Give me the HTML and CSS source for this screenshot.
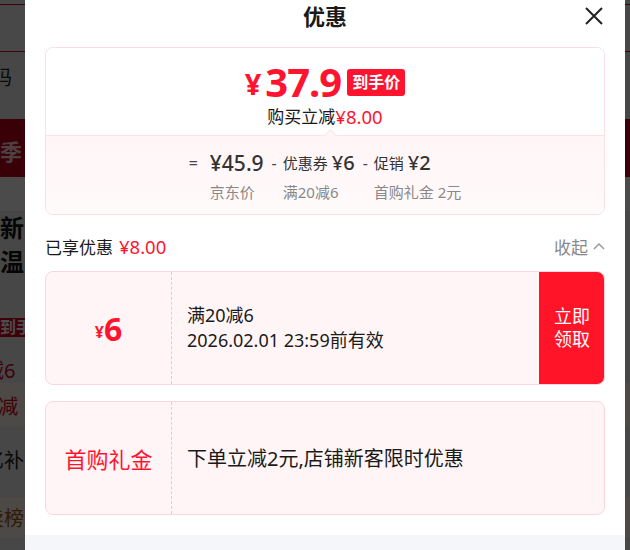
FILE: index.html
```html
<!DOCTYPE html>
<html lang="zh-CN">
<head>
<meta charset="utf-8">
<title>优惠</title>
<link rel="stylesheet" href="styles.css">
</head>
<body>
<div class="page">
  <div class="pg-top"></div>
  <div class="pg-bar"></div>
  <div class="pg-row pg-code"><span>二维码</span><i class="pg-pill"></i></div>
  <div class="pg-banner"><span>四季</span></div>
  <div class="pg-gap"></div>
  <div class="pg-title"><span>焕新</span><span>保温</span></div>
  <div class="pg-tagrow"><span class="pg-tag">到手</span></div>
  <div class="pg-row pg-red pg-cut"><span>满减6</span></div>
  <div class="pg-row pg-warm pg-red"><span>200减</span></div>
  <div class="pg-row pg-dark"><span>百亿补</span></div>
  <div class="pg-row pg-warm pg-brown"><span>热卖榜</span></div>
</div>
<div class="mask"></div>
<div class="sheet">
  <header class="sheet-head">
    <h1>优惠</h1>
    <button class="close" aria-label="关闭">
      <svg width="18" height="18" viewBox="0 0 18 18"><path d="M1 1L17 17M17 1L1 17" stroke="#222" stroke-width="2" fill="none"/></svg>
    </button>
  </header>
  <div class="sheet-body">
    <section class="price-card">
      <div class="price-top">
        <div class="price-line"><span class="yen">¥</span><span class="num">37.9</span><span class="tag">到手价</span></div>
        <div class="save">购买立减<em>¥8.00</em></div>
      </div>
      <div class="price-calc">
        <span class="op op-eq">=</span>
        <div class="term"><div class="val"><b>¥45.9</b></div><div class="lbl">京东价</div></div>
        <span class="op">-</span>
        <div class="term"><div class="val">优惠券 <b>¥6</b></div><div class="lbl">满20减6</div></div>
        <span class="op">-</span>
        <div class="term"><div class="val">促销 <b>¥2</b></div><div class="lbl">首购礼金 2元</div></div>
      </div>
    </section>
    <div class="enjoyed">
      <div class="enjoyed-l">已享优惠 <em>¥8.00</em></div>
      <div class="fold">收起<svg width="12" height="8" viewBox="0 0 12 8"><path d="M1 7L6 2L11 7" stroke="#999" stroke-width="1.5" fill="none"/></svg></div>
    </div>
    <div class="coupon">
      <div class="c-left"><span class="c-yen">¥</span><span class="c-amt">6</span></div>
      <div class="c-mid"><div>满20减6</div><div>2026.02.01 23:59前有效</div></div>
      <div class="c-btn">立即<br>领取</div>
    </div>
    <div class="coupon">
      <div class="c-left"><span class="c-gift">首购礼金</span></div>
      <div class="c-mid c-big">下单立减2元,店铺新客限时优惠</div>
    </div>
  </div>
  <div class="sheet-foot"></div>
</div>
</body>
</html>
```
FILE: styles.css
```css
* { box-sizing: border-box; }
html, body { margin: 0; padding: 0; }
body {
  width: 630px;
  height: 550px;
  overflow: hidden;
  font-family: "Noto Sans", "Noto Sans CJK SC", sans-serif;
  background: #ededed;
}

/* background page (dimmed) */
.page { width: 630px; }
.pg-top { height: 4px; background: #f0f0f0; }
.pg-bar { height: 48px; background: #f0f0f0; border-top: 1px solid #c8102e; border-bottom: 1px solid #c8102e; }
.pg-row { display: flex; align-items: center; font-size: 20px; color: #222; white-space: nowrap; }
.pg-row span { margin-left: -36px; }
.pg-code { height: 67px; padding-bottom: 18px; }
.pg-code span { margin-left: -48px; }
.pg-pill { display: block; width: 14px; height: 22px; margin-left: 17px; border: 1px solid #cfcfcf; border-radius: 8px; }
.pg-banner { height: 58px; padding-top: 4px; background: #c3001d; color: #ffd8dd; font-size: 22px; font-weight: 700; display: flex; align-items: center; white-space: nowrap; }
.pg-banner span { margin-left: -22px; }
.pg-gap { height: 34px; background: #fafafa; }
.pg-title { height: 68px; display: flex; flex-direction: column; font-size: 24px; font-weight: 700; color: #111; line-height: 34px; white-space: nowrap; }
.pg-title span { margin-left: -24px; }
.pg-tagrow { height: 58px; display: flex; align-items: flex-end; }
.pg-tag { background: #d2001c; color: #fff; font-size: 16px; line-height: 19px; font-weight: 700; padding: 0 6px 0 20px; margin-left: -20px; }
.pg-red { color: #d0001c; }
.pg-cut { height: 46px; padding-top: 18px; }
.pg-warm { background: #fff4ea; height: 44px; }
.pg-dark { height: 70px; padding-bottom: 6px; color: #222; }
.pg-brown { color: #a45a10; height: 40px; }

.mask { position: fixed; inset: 0; background: rgba(0, 0, 0, 0.7); }

/* sheet */
.sheet {
  position: fixed;
  left: 25px;
  top: 0;
  width: 600px;
  height: 550px;
  background: #fff;
  display: flex;
  flex-direction: column;
}
.sheet-head { position: relative; height: 32px; text-align: center; }
.sheet-head h1 { margin: 0; font-size: 22px; line-height: 32px; font-weight: 700; color: #1a1a1a; }
.close { position: absolute; right: 22px; top: 7px; width: 18px; height: 18px; padding: 0; border: 0; background: none; display: block; }
.close svg { display: block; }

.sheet-body { flex: 1; padding: 15px 20px 0; overflow: hidden; }
.sheet-foot { height: 15px; background: #f5f6fa; }

.price-card { border: 1px solid #fcdde3; border-radius: 8px; overflow: hidden; }
.price-top { padding: 14px 0 7px; text-align: center; background: #fff; }
.price-line { height: 40px; display: flex; align-items: center; justify-content: center; color: #ff1430; font-weight: 700; }
.yen { font-size: 29px; margin-right: 4px; margin-top: 4px; line-height: 30px; }
.num { font-size: 40px; letter-spacing: -1px; line-height: 40px; }
.tag { margin-left: 6px; background: #ff1430; color: #fff; font-size: 16px; line-height: 27px; height: 27px; padding: 0 5px; border-radius: 3px; }
.save { margin-top: 4px; height: 22px; font-size: 17px; line-height: 22px; color: #1a1a1a; display: flex; justify-content: center; align-items: center; }
.save em, .enjoyed em { font-style: normal; color: #ff1430; font-size: 18.5px; }

.price-calc {
  position: relative;
  border-top: 1px solid #fde3e8;
  background: linear-gradient(#fff5f7, #fffafb);
  padding: 13px 0 11px;
  display: flex;
  justify-content: center;
  align-items: flex-start;
}
.price-calc::before {
  content: "";
  position: absolute;
  left: 280px;
  top: -5px;
  width: 8px;
  height: 8px;
  background: #fff5f7;
  border-top: 1px solid #fde3e8;
  border-left: 1px solid #fde3e8;
  transform: rotate(45deg);
}
.op { font-size: 16px; height: 28px; line-height: 28px; color: #444; margin: 0 6px 0 8px; }
.op-eq { margin: 0 12px 0 0; }
.term { display: flex; flex-direction: column; gap: 4px; }
.val { height: 28px; font-size: 15px; line-height: 28px; color: #333; white-space: nowrap; display: flex; align-items: center; gap: 4px; }
.val b { font-size: 21px; font-weight: 500; color: #333; }
.term:nth-of-type(n+2) .val b { font-size: 20px; }
.lbl { height: 22px; font-size: 15px; line-height: 22px; color: #888; white-space: nowrap; }

.enjoyed { margin-top: 19px; height: 24px; display: flex; justify-content: space-between; align-items: center; font-size: 17px; color: #1a1a1a; }
.enjoyed-l { display: flex; align-items: center; gap: 6px; height: 24px; }
.fold { color: #888; display: flex; align-items: center; gap: 5px; }
.fold svg { display: block; }

.coupon {
  margin-top: 13px;
  height: 114px;
  display: flex;
  border: 1px solid #fcd6dd;
  border-radius: 8px;
  background: #fff5f6;
  overflow: hidden;
}
.coupon + .coupon { margin-top: 16px; }
.c-left { width: 126px; border-right: 1px dashed #f6c3cc; display: flex; align-items: center; justify-content: center; color: #ff1430; }
.c-yen { font-size: 16px; font-weight: 700; margin-top: 8px; }
.c-amt { font-size: 32px; font-weight: 700; }
.c-gift { font-size: 22px; }
.c-mid { flex: 1; padding-left: 15px; display: flex; flex-direction: column; justify-content: center; font-size: 18px; line-height: 25px; color: #1a1a1a; }
.c-big { font-size: 20px; }
.c-btn { width: 66px; margin: -1px -1px -1px 0; background: #ff1428; color: #fff; font-size: 18px; line-height: 23px; display: flex; align-items: center; justify-content: center; text-align: center; }
```
